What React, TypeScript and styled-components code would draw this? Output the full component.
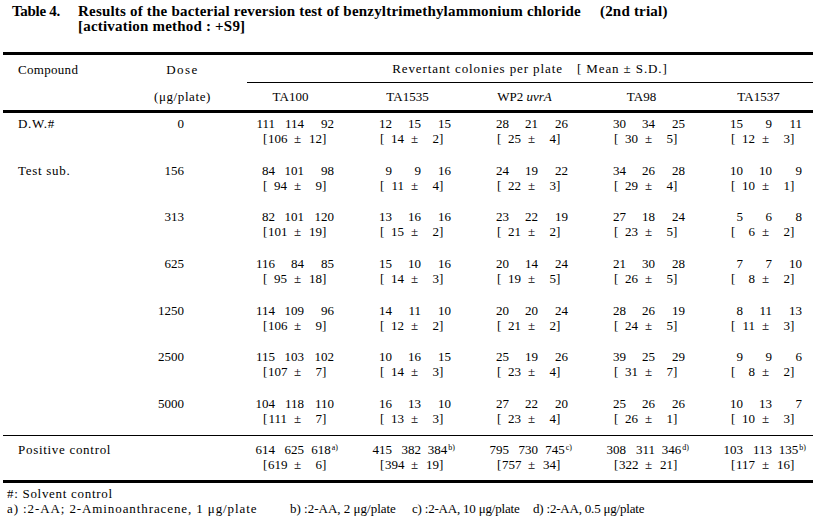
import React from 'react'
import styled, { createGlobalStyle } from 'styled-components'

const GlobalStyle = createGlobalStyle`
  html, body {
    margin: 0;
    padding: 0;
    background: #fff;
  }
  body {
    width: 821px;
    height: 519px;
    overflow: hidden;
    color: #000;
    font-family: 'Liberation Serif', 'Times New Roman', serif;
    font-size: 13px;
    letter-spacing: 0.7px;
  }
`

// compound | dose | spacer | five strains
const COLUMNS = '137px 85px 22px 117px 117px 117px 117px 98px'

const Page = styled.div`
  padding-top: 4px;
`

const Caption = styled.div`
  display: grid;
  grid-template-columns: 66px auto;
  padding-left: 12px;
  font-size: 15px;
  line-height: 15px;
  font-weight: bold;
  letter-spacing: 0.2px;
`
const CaptionLabel = styled.div`
  letter-spacing: -0.3px;
`
const Trial = styled.span`
  margin-left: 19px;
`

const Table = styled.div`
  width: 810px;
  margin: 18px 0 0 3px;
  border-top: 3px solid #000;
  border-bottom: 3px solid #000;
  line-height: 15px;
`

const Head = styled.div`
  display: grid;
  grid-template-columns: ${COLUMNS};
  grid-template-rows: 28px 27px;
  border-bottom: 3px solid #000;
`
const HeadCell = styled.div<{ $col: string; $row: number }>`
  grid-column: ${p => p.$col};
  grid-row: ${p => p.$row};
  display: flex;
  align-items: center;
  justify-content: center;
  white-space: pre;
`
const CompoundHead = styled(HeadCell)`
  justify-content: flex-start;
  padding-left: 15px;
  letter-spacing: 0.3px;
`
const DoseHead = styled(HeadCell)`
  letter-spacing: 1.4px;
`
const UnitHead = styled(HeadCell)`
  letter-spacing: 0.6px;
`
const Revertant = styled(HeadCell)`
  gap: 14px;
  border-bottom: 1px solid #000;
  letter-spacing: 0.9px;
`
const StrainHead = styled(HeadCell)`
  justify-self: start;
  width: 87px;
  letter-spacing: 0;
`

const Rows = styled.div`
  display: flex;
  flex-direction: column;
  gap: 16.67px;
  padding: 3px 0 9px;
  border-bottom: 1px solid #000;
`
const ControlRows = styled.div`
  padding: 6px 0 8px;
`
const Row = styled.div`
  display: grid;
  grid-template-columns: ${COLUMNS};
`
const Compound = styled.div`
  padding-left: 15px;
  white-space: nowrap;
`
const Dose = styled.div`
  padding-right: 41px;
  text-align: right;
  letter-spacing: 0;
`

const StrainCell = styled.div`
  letter-spacing: 0;
`
const NumLine = styled.div<{ $note?: boolean }>`
  display: grid;
  grid-template-columns: ${p => (p.$note ? '28px 29px 34px' : '28px 29px 30px')};
  text-align: right;
  white-space: nowrap;
`
const Note = styled.sup`
  font-size: 8px;
  line-height: 0;
  margin-left: 1px;
  vertical-align: 4px;
`
const MeanLine = styled.div`
  display: grid;
  grid-template-columns: 5px 19px 20px 15px 6px;
  padding-left: 16px;
  white-space: nowrap;
`
const Mean = styled.span`
  text-align: right;
`
const PlusMinus = styled.span`
  padding-left: 7px;
`

const Footnotes = styled.div`
  padding: 3px 0 0 7px;
  line-height: 15px;
`
const NoteRow = styled.div`
  display: grid;
  grid-template-columns: 283px 122px 121px auto;
  white-space: nowrap;
`
const FootItem = styled.span<{ $spacing: number }>`
  letter-spacing: ${p => p.$spacing}px;
`

type Counts = { n: [number, number, number]; mean: number; sd: number; note?: string }
type Group = { compound?: string; dose?: string; cells: Counts[] }

const c = (a: number, b: number, d: number, mean: number, sd: number, note?: string): Counts => ({
  n: [a, b, d],
  mean,
  sd,
  note
})

const STRAINS: React.ReactNode[] = [
  'TA100',
  'TA1535',
  <span>WP2 <i>uvrA</i></span>,
  'TA98',
  'TA1537'
]

const groups: Group[] = [
  { compound: 'D.W.#', dose: '0', cells: [c(111, 114, 92, 106, 12), c(12, 15, 15, 14, 2), c(28, 21, 26, 25, 4), c(30, 34, 25, 30, 5), c(15, 9, 11, 12, 3)] },
  { compound: 'Test sub.', dose: '156', cells: [c(84, 101, 98, 94, 9), c(9, 9, 16, 11, 4), c(24, 19, 22, 22, 3), c(34, 26, 28, 29, 4), c(10, 10, 9, 10, 1)] },
  { dose: '313', cells: [c(82, 101, 120, 101, 19), c(13, 16, 16, 15, 2), c(23, 22, 19, 21, 2), c(27, 18, 24, 23, 5), c(5, 6, 8, 6, 2)] },
  { dose: '625', cells: [c(116, 84, 85, 95, 18), c(15, 10, 16, 14, 3), c(20, 14, 24, 19, 5), c(21, 30, 28, 26, 5), c(7, 7, 10, 8, 2)] },
  { dose: '1250', cells: [c(114, 109, 96, 106, 9), c(14, 11, 10, 12, 2), c(20, 20, 24, 21, 2), c(28, 26, 19, 24, 5), c(8, 11, 13, 11, 3)] },
  { dose: '2500', cells: [c(115, 103, 102, 107, 7), c(10, 16, 15, 14, 3), c(25, 19, 26, 23, 4), c(39, 25, 29, 31, 7), c(9, 9, 6, 8, 2)] },
  { dose: '5000', cells: [c(104, 118, 110, 111, 7), c(16, 13, 10, 13, 3), c(27, 22, 20, 23, 4), c(25, 26, 26, 26, 1), c(10, 13, 7, 10, 3)] }
]

const positive: Group = {
  compound: 'Positive control',
  cells: [
    c(614, 625, 618, 619, 6, 'a)'),
    c(415, 382, 384, 394, 19, 'b)'),
    c(795, 730, 745, 757, 34, 'c)'),
    c(308, 311, 346, 322, 21, 'd)'),
    c(103, 113, 135, 117, 16, 'b)')
  ]
}

const Counts = ({ value }: { value: Counts }) => (
  <StrainCell>
    <NumLine $note={!!value.note}>
      <span>{value.n[0]}</span>
      <span>{value.n[1]}</span>
      <span>
        {value.n[2]}
        {value.note && <Note>{value.note}</Note>}
      </span>
    </NumLine>
    <MeanLine>
      <span>[</span>
      <Mean>{value.mean}</Mean>
      <PlusMinus>±</PlusMinus>
      <Mean>{value.sd}</Mean>
      <span>]</span>
    </MeanLine>
  </StrainCell>
)

const GroupRow = ({ group }: { group: Group }) => (
  <Row>
    <Compound>{group.compound}</Compound>
    <Dose>{group.dose}</Dose>
    <div />
    {group.cells.map((value, index) => (
      <Counts key={index} value={value} />
    ))}
  </Row>
)

const App: React.FC = () => (
  <Page>
    <GlobalStyle />
    <Caption>
      <CaptionLabel>Table 4.</CaptionLabel>
      <div>
        <div>
          Results of the bacterial reversion test of benzyltrimethylammonium chloride
          <Trial>(2nd trial)</Trial>
        </div>
        <div>[activation method : +S9]</div>
      </div>
    </Caption>

    <Table>
      <Head>
        <CompoundHead $col='1' $row={1}>Compound</CompoundHead>
        <DoseHead $col='2' $row={1}>Dose</DoseHead>
        <Revertant $col='4 / 9' $row={1}>
          <span>Revertant colonies per plate</span>
          <span>[ Mean ± S.D.]</span>
        </Revertant>
        <UnitHead $col='2' $row={2}>(μg/plate)</UnitHead>
        {STRAINS.map((name, index) => (
          <StrainHead key={index} $col={String(index + 4)} $row={2}>
            {name}
          </StrainHead>
        ))}
      </Head>

      <Rows>
        {groups.map((group, index) => (
          <GroupRow key={index} group={group} />
        ))}
      </Rows>
      <ControlRows>
        <GroupRow group={positive} />
      </ControlRows>
    </Table>

    <Footnotes>
      <div>#: Solvent control</div>
      <NoteRow>
        <FootItem $spacing={0.9}>a) :2-AA; 2-Aminoanthracene, 1 μg/plate</FootItem>
        <FootItem $spacing={0}>b) :2-AA, 2 μg/plate</FootItem>
        <FootItem $spacing={-0.2}>c) :2-AA, 10 μg/plate</FootItem>
        <FootItem $spacing={-0.2}>d) :2-AA, 0.5 μg/plate</FootItem>
      </NoteRow>
    </Footnotes>
  </Page>
)

export default App
